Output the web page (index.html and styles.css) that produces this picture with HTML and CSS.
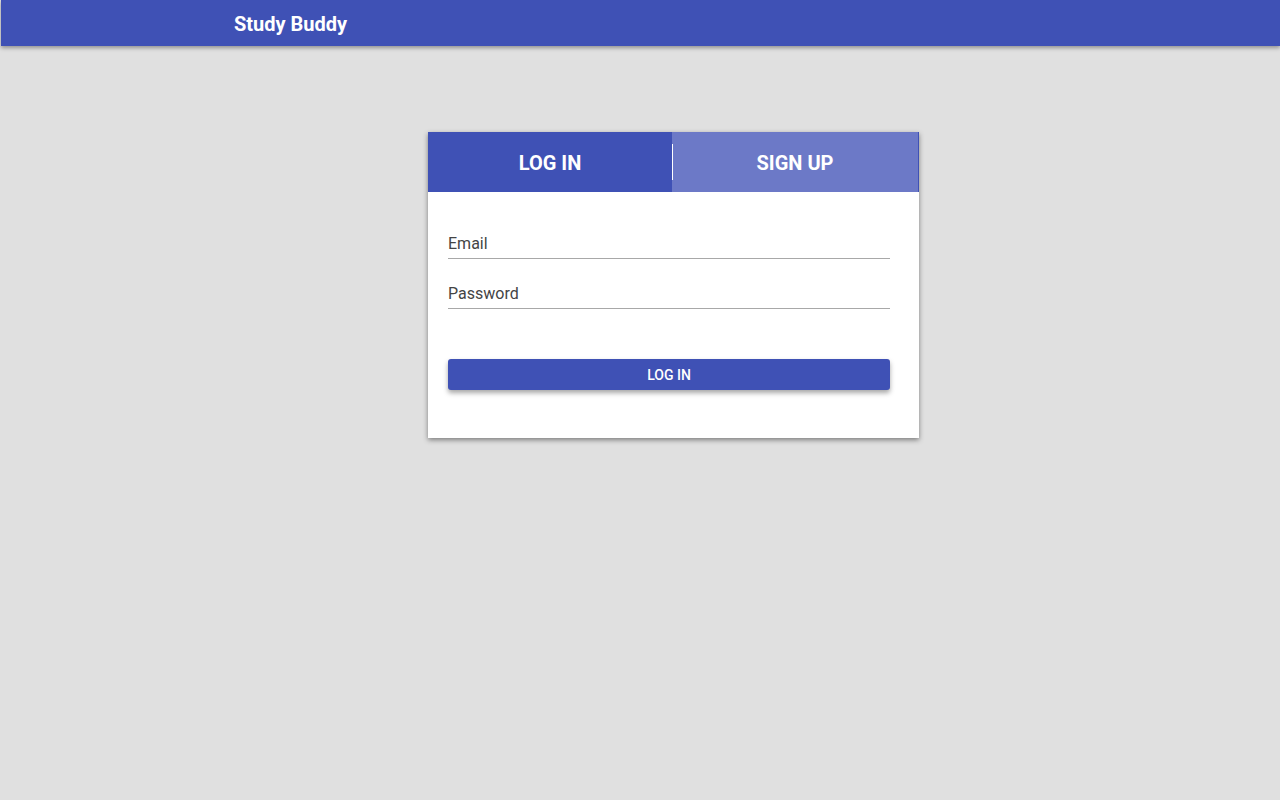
FILE: index.html
```html
<!DOCTYPE html>
<html>
<head>
<meta charset="utf-8">
<link rel="stylesheet" href="styles.css">
</head>
<body>
<header class="toolbar"><span class="title">Study Buddy</span></header>
<main class="main">
  <section class="card">
    <div class="tabs">
      <div class="tab active">LOG IN</div>
      <div class="tab inactive">SIGN UP</div>
    </div>
    <form class="form">
      <label class="field"><input type="text" placeholder="Email"></label>
      <label class="field"><input type="password" placeholder="Password"></label>
      <button type="button" class="btn">LOG IN</button>
    </form>
  </section>
</main>
</body>
</html>
```
FILE: styles.css
```css
* { box-sizing: border-box; }
html, body { margin: 0; padding: 0; }
body {
  background: #e0e0e0;
  font-family: Roboto, "Noto Sans", sans-serif;
  min-height: 800px;
}
.toolbar {
  height: 46px;
  margin-left: 1px;
  background: #3f51b5;
  box-shadow: 0 2px 4px rgba(0,0,0,0.35);
  display: flex;
  align-items: center;
  padding-left: 233px;
  padding-top: 1px;
}
.title {
  color: #fff;
  font-size: 20px;
  font-weight: 700;
}
.main {
  display: flex;
  justify-content: center;
  padding-top: 86px;
  padding-left: 67px;
}
.card {
  width: 491px;
  background: #fff;
  box-shadow: 0 2px 5px rgba(0,0,0,0.45);
}
.tabs {
  display: flex;
  height: 60px;
}
.tab {
  display: flex;
  align-items: center;
  justify-content: center;
  color: #fff;
  font-size: 20px;
  font-weight: 700;
  padding-top: 1px;
}
.tab.active {
  width: 244px;
  background: #3f51b5;
  position: relative;
}
.tab.active::after {
  content: "";
  position: absolute;
  right: -1px;
  top: 12px;
  bottom: 12px;
  width: 1px;
  background: #fff;
}
.tab.inactive {
  flex: 1;
  background: #6c79c7;
  border-right: 1px solid #3f51b5;
}
.form {
  display: flex;
  flex-direction: column;
  padding: 34px 29px 48px 20px;
}
.field { display: block; margin-bottom: 17px; }
.field input {
  width: 100%;
  border: none;
  border-bottom: 1px solid #a8a8a8;
  outline: none;
  font-family: Roboto, sans-serif;
  font-size: 16px;
  color: #333;
  padding: 8px 0 5px 0;
  background: transparent;
}
.field input::placeholder { color: #444; }
.btn {
  margin-top: 33px;
  height: 31px;
  border: none;
  border-radius: 3px;
  background: #3f51b5;
  color: #fff;
  font-family: Roboto, sans-serif;
  font-size: 14px;
  font-weight: 500;
  box-shadow: 0 3px 5px rgba(0,0,0,0.35);
}
```
